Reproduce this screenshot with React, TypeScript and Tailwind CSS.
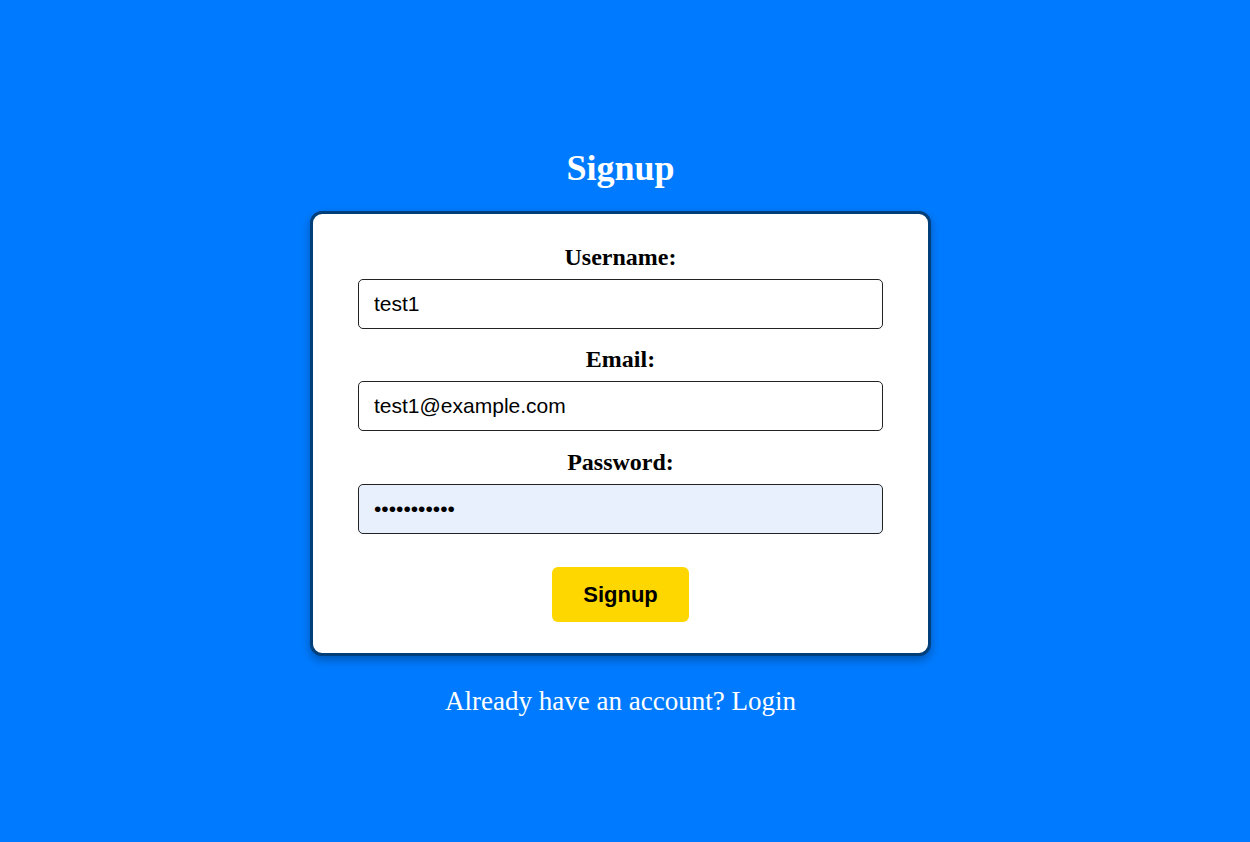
import React from "react";

export default function App() {
  return (
    <div className="min-h-screen w-full bg-[#007bff] pr-[9px] pt-[150px] flex flex-col items-center" style={{ fontFamily: '"Liberation Serif", serif' }}>
      <h2 className="text-[36px] leading-[36px] font-bold text-white">Signup</h2>
      <form
        className="mt-[25px] w-[621px] bg-white border-[3px] border-[#003f7a] rounded-[12px] shadow-[0_4px_10px_rgba(0,0,0,0.3)] pt-[31px] pb-[31px] flex flex-col items-center"
        onSubmit={(e) => e.preventDefault()}
      >
        <label className="h-[24px] leading-[24px] text-[24px] font-bold text-black mb-[10px]">Username:</label>
        <input
          type="text"
          defaultValue="test1"
          className="w-[525px] h-[50px] border border-[#222] rounded-[5px] pl-[15px] text-[21px] text-black outline-none mb-[18px]"
          style={{ fontFamily: '"Liberation Sans", Arial, sans-serif' }}
        />
        <label className="h-[24px] leading-[24px] text-[24px] font-bold text-black mb-[10px]">Email:</label>
        <input
          type="email"
          defaultValue="test1@example.com"
          className="w-[525px] h-[50px] border border-[#222] rounded-[5px] pl-[15px] text-[21px] text-black outline-none mb-[19px]"
          style={{ fontFamily: '"Liberation Sans", Arial, sans-serif' }}
        />
        <label className="h-[24px] leading-[24px] text-[24px] font-bold text-black mb-[10px]">Password:</label>
        <input
          type="password"
          defaultValue="password123"
          className="w-[525px] h-[50px] border border-[#222] rounded-[5px] pl-[15px] text-[21px] text-black bg-[#e8f0fe] outline-none"
          style={{ fontFamily: '"Liberation Sans", Arial, sans-serif' }}
        />
        <button
          type="submit"
          className="mt-[33px] w-[137px] h-[55px] bg-[#ffd700] rounded-[6px] text-[22px] font-bold text-black"
          style={{ fontFamily: '"Liberation Sans", Arial, sans-serif' }}
        >
          Signup
        </button>
      </form>
      <p className="mt-[32px] text-[27px] leading-[27px] text-white">Already have an account? Login</p>
    </div>
  );
}
